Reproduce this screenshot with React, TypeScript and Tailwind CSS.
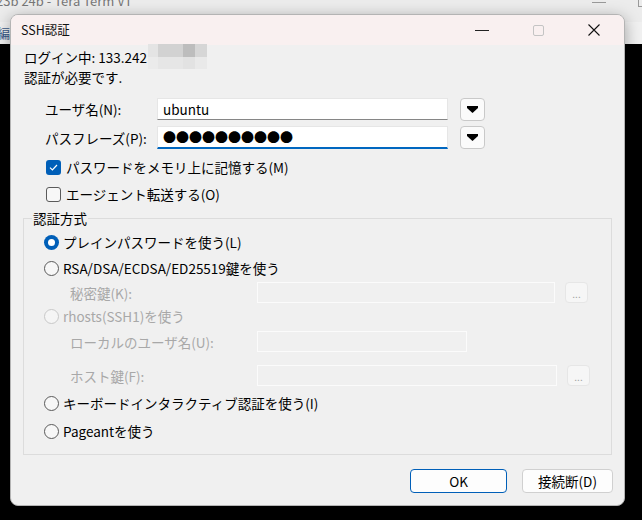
import React from 'react';

const jp = { fontFamily: '"Noto Sans CJK JP", "Noto Sans", sans-serif' };

function DropButton() {
  return (
    <button className="flex h-[23px] w-[25px] items-center justify-center rounded-[4px] border border-[#c9c9c9] bg-[#fbfbfb]">
      <svg width="11" height="7" viewBox="0 0 11 7">
        <polygon points="0,0 11,0 11,2 5.5,7 0,2" fill="#000" />
      </svg>
    </button>
  );
}

function Checkbox({ checked, label }: { checked?: boolean; label: string }) {
  return (
    <div className="flex h-[20px] items-center gap-[5px] pl-[35px]">
      {checked ? (
        <span className="flex h-[15px] w-[15px] items-center justify-center rounded-[3px] bg-[#005fb8]">
          <svg width="9" height="7" viewBox="0 0 9 7">
            <path d="M1 3.6 L3.4 6 L8 1" stroke="#fff" strokeWidth="1.2" fill="none" />
          </svg>
        </span>
      ) : (
        <span className="h-[15px] w-[15px] rounded-[3px] border border-[#5a5a5a] bg-[#f7f7f7]" />
      )}
      <span>{label}</span>
    </div>
  );
}

function Radio({ selected, disabled, label }: { selected?: boolean; disabled?: boolean; label: string }) {
  return (
    <div className="flex h-[20px] items-center gap-[4px] pl-[20px]">
      {selected ? (
        <span className="flex h-[15px] w-[15px] items-center justify-center rounded-full bg-[#005fb8]">
          <span className="h-[7px] w-[7px] rounded-full bg-white" />
        </span>
      ) : disabled ? (
        <span className="h-[15px] w-[15px] rounded-full border border-[#c8c8c8] bg-[#f5f5f5]" />
      ) : (
        <span className="h-[15px] w-[15px] rounded-full border border-[#5a5a5a] bg-[#f7f7f7]" />
      )}
      <span className={disabled ? 'text-[#a8a8a8]' : 'text-black'}>{label}</span>
    </div>
  );
}

function DisabledRow({ label, width, browse }: { label: string; width: string; browse?: boolean }) {
  return (
    <div className="flex h-[21px] items-center">
      <span className="w-[233px] pl-[46px] text-[#a8a8a8]">{label}</span>
      <span className={`h-[21px] border border-[#fbfbfb] bg-[#f0f0f0] ${width}`} />
      {browse && (
        <span className="ml-[10px] flex h-[21px] w-[23px] items-end justify-center rounded-[4px] border border-[#e6e6e6] bg-[#f6f6f6] pb-[3px] text-[10px] leading-none text-[#a0a0a0]">
          ...
        </span>
      )}
    </div>
  );
}

export default function App() {
  return (
    <div className="relative h-[520px] w-[642px] overflow-hidden bg-black text-[13.5px] leading-[20px]" style={jp}>
      {/* Tera Term window behind */}
      <div className="absolute left-0 right-0 top-0 h-[22px] bg-[#ececec]">
        <span className="absolute -top-[9px] left-[-4px] text-[13px] text-[#777]">23b 24b - Tera Term VT</span>
        <span className="absolute right-[36px] top-[2px] h-[1px] w-[14px] bg-[#999]" />
        <span className="absolute -top-[4px] right-[-6px] h-[11px] w-[10px] border border-[#999]" />
      </div>
      <div className="absolute left-0 right-0 top-[22px] h-[22px] bg-[#f1f1f1]">
        <span className="absolute left-[-3px] top-[1px] text-[13px] text-[#3a5a8a]">編集</span>
      </div>

      {/* dialog */}
      <div className="absolute left-[10px] top-[14px] flex h-[492px] w-[615px] flex-col overflow-hidden rounded-lg border border-[#b4b4b4] bg-[#f0f0f0] shadow-[0_4px_16px_rgba(0,0,0,0.35)]">
        <div className="flex h-[30px] shrink-0 items-center bg-[#f9f0f0]">
          <span className="pl-[10px] text-[12.5px] text-[#111]">SSH認証</span>
          <div className="ml-auto flex h-full pr-[2px]">
            <span className="flex w-[56px] items-center justify-center">
              <span className="h-[1px] w-[14px] bg-[#222]" />
            </span>
            <span className="flex w-[56px] items-center justify-center">
              <span className="h-[11px] w-[11px] rounded-[2px] border border-[#c4c4c4]" />
            </span>
            <span className="flex w-[56px] items-center justify-center">
              <svg width="12" height="12" viewBox="0 0 12 12">
                <path d="M0.5 0.5 L11.5 11.5 M11.5 0.5 L0.5 11.5" stroke="#111" strokeWidth="1.1" />
              </svg>
            </span>
          </div>
        </div>

        <div className="flex flex-col pt-[2px]">
          <div className="flex h-[20px] items-center pl-[13px]">
            <span>ログイン中: 133.242</span>
            <span className="-mt-[1px] ml-[1px] grid h-[25px] w-[59px] grid-cols-[10px_25px_12px_12px] grid-rows-2">
              <span className="bg-[#e4e4e4]" />
              <span className="bg-[#d2d2d2]" />
              <span className="bg-[#bdbdbd]" />
              <span className="bg-[#d6d6d6]" />
              <span className="bg-[#ebebeb]" />
              <span className="bg-[#e6e6e6]" />
              <span className="bg-[#e2e2e2]" />
              <span className="bg-[#e9e9e9]" />
            </span>
          </div>
          <div className="h-[20px] pl-[13px]">認証が必要です.</div>

          <div className="mt-[11px] flex h-[22px] items-center">
            <span className="w-[146px] pl-[34px]">ユーザ名(N):</span>
            <span className="flex h-[22px] w-[291px] items-center border border-b-[#868686] border-[#e6e6e6] bg-white pl-[5px]">ubuntu</span>
            <span className="ml-[12px]">
              <DropButton />
            </span>
          </div>
          <div className="mt-[6px] flex h-[23px] items-center">
            <span className="w-[146px] pl-[34px]">パスフレーズ(P):</span>
            <span className="flex h-[23px] w-[291px] items-center border border-b-2 border-[#e6e6e6] border-b-[#0067c0] bg-white pl-[5px] text-[13px]">
              ●●●●●●●●●●
            </span>
            <span className="ml-[12px]">
              <DropButton />
            </span>
          </div>

          <div className="mt-[8px]">
            <Checkbox checked label="パスワードをメモリ上に記憶する(M)" />
          </div>
          <div className="mt-[7px]">
            <Checkbox label="エージェント転送する(O)" />
          </div>

          <fieldset className="mx-[12px] mt-[4px] flex flex-col border border-[#dcdcdc] pb-[13px]">
            <legend className="ml-[8px] px-[1px]">認証方式</legend>
            <div className="mt-[4px]">
              <Radio selected label="プレインパスワードを使う(L)" />
            </div>
            <div className="mt-[6px]">
              <Radio label="RSA/DSA/ECDSA/ED25519鍵を使う" />
            </div>
            <div className="mt-[4px]">
              <DisabledRow label="秘密鍵(K):" width="w-[298px]" browse />
            </div>
            <div className="mt-[3px]">
              <Radio disabled label="rhosts(SSH1)を使う" />
            </div>
            <div className="mt-[5px]">
              <DisabledRow label="ローカルのユーザ名(U):" width="w-[210px]" />
            </div>
            <div className="mt-[13px]">
              <DisabledRow label="ホスト鍵(F):" width="w-[300px]" browse />
            </div>
            <div className="mt-[7px]">
              <Radio label="キーボードインタラクティブ認証を使う(I)" />
            </div>
            <div className="mt-[8px]">
              <Radio label="Pageantを使う" />
            </div>
          </fieldset>

          <div className="mt-[14px] flex justify-end gap-[15px] pr-[11px]">
            <button className="h-[24px] w-[97px] rounded-[4px] border border-[#005fb8] bg-[#fdfdfd]">OK</button>
            <button className="h-[24px] w-[91px] rounded-[4px] border border-[#d0d0d0] bg-[#fdfdfd]">接続断(D)</button>
          </div>
        </div>
      </div>
    </div>
  );
}
